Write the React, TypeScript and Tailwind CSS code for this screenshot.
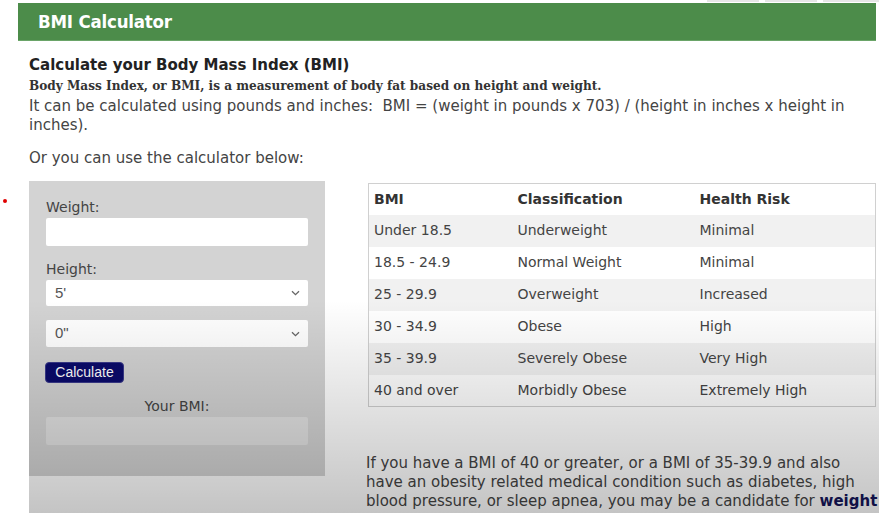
import React from "react";

const rows = [
  ["Under 18.5", "Underweight", "Minimal"],
  ["18.5 - 24.9", "Normal Weight", "Minimal"],
  ["25 - 29.9", "Overweight", "Increased"],
  ["30 - 34.9", "Obese", "High"],
  ["35 - 39.9", "Severely Obese", "Very High"],
  ["40 and over", "Morbidly Obese", "Extremely High"],
];

function Chevron() {
  return (
    <svg width="9" height="6" viewBox="0 0 9 6" className="absolute right-[8px] top-1/2 -translate-y-1/2">
      <path d="M1 1.2 L4.5 4.6 L8 1.2" fill="none" stroke="#666" strokeWidth="1.3" />
    </svg>
  );
}

export default function App() {
  const sans = { fontFamily: '"DejaVu Sans", Verdana, sans-serif' };
  return (
    <div className="relative w-[879px] h-[513px] overflow-hidden bg-white" style={sans}>
      {/* top strip with tabs */}
      <div className="h-[3px] flex justify-end gap-[6px] pr-0">
        <div className="w-[52px] h-[2px] bg-[#e6e6e6]" />
        <div className="w-[52px] h-[2px] bg-[#e6e6e6]" />
        <div className="w-[56px] h-[2px] bg-[#e6e6e6]" />
      </div>
      {/* header */}
      <div className="ml-[18px] w-[858px] h-[38px] bg-[#4c8c4a] flex items-center pl-[20px] border-b border-[#6aa468]">
        <span
          className="text-white text-[18.5px] font-bold tracking-[-0.2px]"
          style={{ fontFamily: '"DejaVu Sans Condensed", "DejaVu Sans", sans-serif', fontStretch: "condensed" }}
        >
          BMI Calculator
        </span>
      </div>

      <div className="ml-[29px] mt-[14px] text-[#444]">
        <h2 className="text-[15px] leading-[20px] font-bold text-[#222]">Calculate your Body Mass Index (BMI)</h2>
        <p
          className="text-[12.1px] leading-[22px] font-bold text-[#333]"
          style={{ fontFamily: '"DejaVu Serif", Georgia, serif' }}
        >
          Body Mass Index, or BMI, is a measurement of body fat based on height and weight.
        </p>
        <p className="text-[15px] leading-[19px] w-[830px] text-[#444]">
          It can be calculated using pounds and inches:&nbsp; BMI = (weight in pounds x 703) / (height in inches x height in inches).
        </p>
        <p className="mt-[14px] text-[15px] leading-[19px] text-[#444]">Or you can use the calculator below:</p>

        <div className="flex mt-[13px] gap-[43px]">
          {/* calculator panel */}
          <div className="w-[296px] h-[295px] bg-[#d3d3d3] px-[17px] pt-[16px] flex flex-col">
            <div className="text-[14px] leading-[20px] text-[#444]">Weight:</div>
            <div className="mt-[1px] h-[28px] bg-white rounded-[2px]" />
            <div className="mt-[13px] text-[14px] leading-[20px] text-[#444]">Height:</div>
            <div
              className="relative mt-[1px] h-[26px] bg-white rounded-[2px] flex items-center pl-[9px] text-[15px] text-[#555]"
              style={{ fontFamily: '"Liberation Sans", Arial, sans-serif' }}
            >
              5'
              <Chevron />
            </div>
            <div
              className="relative mt-[14px] h-[27px] bg-white rounded-[2px] flex items-center pl-[9px] text-[15px] text-[#555]"
              style={{ fontFamily: '"Liberation Sans", Arial, sans-serif' }}
            >
              0"
              <Chevron />
            </div>
            <div className="mt-[15px]">
              <button
                className="h-[21px] w-[79px] -ml-[1px] bg-[#0b0b6b] text-white text-[14px] rounded-[4px] border border-[#3a3a8a] flex items-center justify-center"
                style={{ fontFamily: '"Liberation Sans", Arial, sans-serif' }}
              >
                Calculate
              </button>
            </div>
            <div className="mt-[13px] text-[14px] leading-[20px] text-[#444] text-center">Your BMI:</div>
            <div className="mt-[1px] h-[28px] bg-[#e2e2e2] rounded-[2px]" />
          </div>

          {/* right column */}
          <div className="w-[508px] pt-[2px]">
            <table className="w-full border border-[#d0d0d0] border-collapse text-[14px] text-[#444]">
              <thead>
                <tr className="h-[31px] bg-white">
                  <th className="text-left font-bold text-[#333] pl-[5px] w-[149px]">BMI</th>
                  <th className="text-left font-bold text-[#333] w-[182px]">Classification</th>
                  <th className="text-left font-bold text-[#333]">Health Risk</th>
                </tr>
              </thead>
              <tbody>
                {rows.map((r, i) => (
                  <tr key={i} className={`h-[32px] ${i % 2 === 0 ? "bg-[#f1f1f1]" : "bg-white"}`}>
                    <td className="pl-[5px]">{r[0]}</td>
                    <td>{r[1]}</td>
                    <td>{r[2]}</td>
                  </tr>
                ))}
              </tbody>
            </table>
            <p className="mt-[47px] -ml-[2px] text-[15px] leading-[19px] text-[#444] w-[513px]">
              If you have a BMI of 40 or greater, or a BMI of 35-39.9 and also have an obesity related medical condition such as diabetes, high blood pressure, or sleep apnea, you may be a candidate for{" "}
              <span className="font-bold text-[#14145a]">weight</span>
            </p>
          </div>
        </div>
      </div>

      {/* red dot */}
      <div className="absolute left-[3px] top-[199px] w-[4px] h-[4px] rounded-full bg-[#e00000]" />

      {/* bottom shading overlay (video frame vignette) */}
      <div
        className="pointer-events-none absolute left-[29px] right-0 top-[300px] bottom-0"
        style={{ background: "linear-gradient(to bottom, rgba(0,0,0,0) 0%, rgba(0,0,0,0.23) 100%)" }}
      />
    </div>
  );
}
